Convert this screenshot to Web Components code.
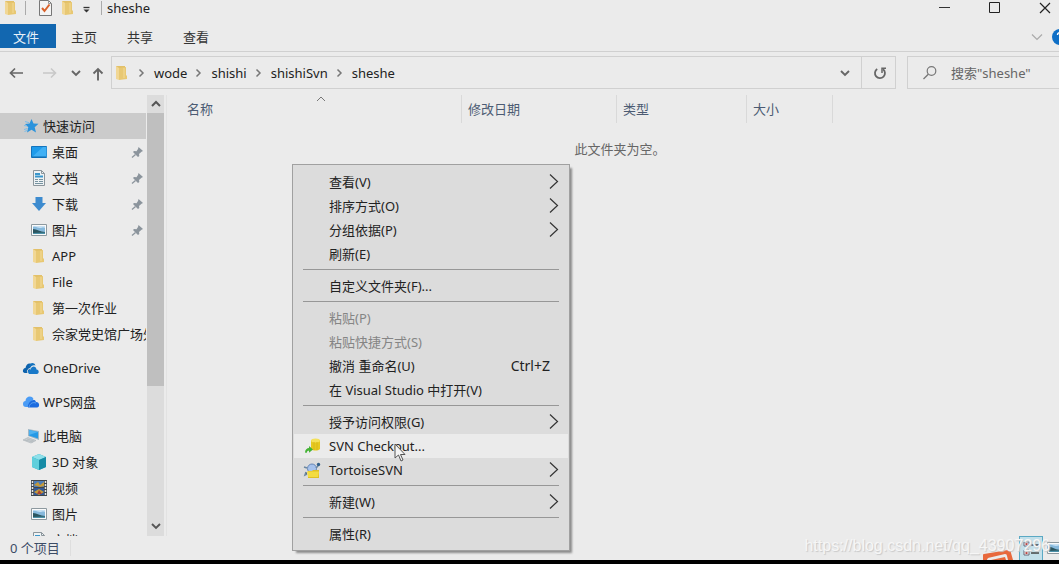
<!DOCTYPE html>
<html lang="zh-CN">
<head>
<meta charset="utf-8">
<title>sheshe</title>
<style>
html,body{margin:0;height:100%;overflow:hidden}
body{font:13px/16px "Noto Sans","Noto Sans CJK SC",sans-serif;color:#222;background:#000}
</style>
</head>
<body>
<explorer-window></explorer-window>
<script>
const define=(name,html,setup)=>customElements.define(name,class extends HTMLElement{
  connectedCallback(){
    if(this.shadowRoot)return;
    const t=document.createElement('template');
    t.innerHTML=typeof html==='function'?html(this):html;
    this.attachShadow({mode:'open'}).append(t.content.cloneNode(true));
    if(setup)setup(this);
  }
});

const ICONS={
  folder:'<path d="M2 1h9v13H2z" fill="#e2c069"/><path d="M2 1l3 2v12l-3-1z" fill="#f1d795"/><path d="M5 3l7-1v8l1 1v3l-8 1z" fill="#e8c873"/><path d="M10 3v10" stroke="#f2da98"/>',
  check:'<path d="M1.500 .5h9l3 3v12h-12z" fill="#f4f4f4" stroke="#777"/><path d="M10.500 .5v3h3" fill="none" stroke="#999"/><path d="M4 8l2.500 3 5-6.500" fill="none" stroke="#d9622b" stroke-width="2"/>',
  drop:'<path d="M4.500 7.500h6" stroke="#333" stroke-width="1.300"/><path d="M4.500 9.500h6l-3 3z" fill="#333"/>',
  min:'<path d="M2 7.500h11" stroke="#333"/>',
  max:'<path d="M2.500 2.500h10v10h-10z" fill="none" stroke="#222"/>',
  close:'<path d="M3 3l10 10M13 3L3 13" stroke="#222" stroke-width="1.200"/>',
  down:'<path d="M4 6l4 4 4-4" fill="none" stroke="currentColor" stroke-width="1.900"/>',
  thin:'<path d="M3 5.500l5 5 5-5" fill="none" stroke="currentColor" stroke-width="1.200"/>',
  up:'<path d="M4 11l4-4 4 4" fill="none" stroke="currentColor" stroke-width="2"/>',
  caret:'<path d="M4 10l4-4 4 4" fill="none" stroke="#777"/>',
  crumb:'<path d="M5.500 4.500l3.500 3.500-3.500 3.500" fill="none" stroke="#777" stroke-width="1.500"/>',
  sub:'<path d="M5 0.500l7.500 7L5 14.500" fill="none" stroke="#333" stroke-width="1.200"/>',
  back:'<path d="M15 8H2.500M7 3.500L2.500 8l4.500 4.500" fill="none" stroke="currentColor" stroke-width="1.700"/>',
  fwd:'<path d="M1 8h12.500M9 3.500L13.500 8l-4.500 4.500" fill="none" stroke="currentColor" stroke-width="1.600"/>',
  upa:'<path d="M8 15.500V4M3.500 8.500L8 4l4.500 4.500" fill="none" stroke="currentColor" stroke-width="1.900"/>',
  refresh:'<path d="M6.200 4A5 5 0 1 0 12 4.200" fill="none" stroke="#666" stroke-width="1.800"/><path d="M11 8V3.300h4" fill="none" stroke="#666" stroke-width="1.500"/>',
  search:'<circle cx="9.500" cy="6" r="4.300" fill="none" stroke="#777" stroke-width="1.200"/><path d="M6.300 9.300L1.500 14" stroke="#777" stroke-width="1.300"/>',
  help:'<circle cx="8" cy="8" r="8" fill="#0f6fc6"/><path d="M5.500 6a2.500 2.500 0 1 1 3.500 2.300l-1 1v1.200M8 12v1.300" fill="none" stroke="#fff" stroke-width="1.500"/>',
  star:'<path d="M8.500 1l2 4.500 5 .3-3.800 3.400 1.300 5.300-4.500-2.700L4 14.500l1.300-5.300L2 6l4.500-.5z" fill="#2b93dc"/><path d="M2 3.500l4 1.200M1 7.500l3 .5M1 11.500l3.500-1M1.500 13.500l2.500-1" stroke="#79bdec"/>',
  desktop:'<path d="M.5 2.500h15v11H.5z" fill="#1f9bea" stroke="#1474bd"/><path d="M1 13L12 3h3.500v10z" fill="#41b0f4"/><path d="M1 13h14" stroke="#0c69ad"/>',
  doc:'<path d="M2.500.5h8l3 3v12h-11z" fill="#eef2f4" stroke="#8b959b"/><path d="M10.500.5v3h3" fill="none" stroke="#8b959b"/><path d="M4 4h5M4 6.500h8" stroke="#3b97cc" stroke-width="1.800"/><path d="M4 9.500h3M4 11.500h3M4 13.500h8M8 9.500h4M8 11.500h4" stroke="#76929f"/>',
  dl:'<path d="M4.500 1h7v6H15l-7 8-7-8h3.500z" fill="#3d8bcf"/>',
  pic:'<path d="M.5 2.500h15v11H.5z" fill="#fafafa" stroke="#8d999f"/><path d="M2 4h12v8H2z" fill="#87b9dc"/><path d="M2 5c3-1 5 1 7 1s3-1 5 0v-2H2z" fill="#c7e1f3"/><path d="M2 7c4 0 7 3 12 3v2H2z" fill="#2b5660"/><path d="M2 11l12-.5V12H2z" fill="#4c91a8"/>',
  cloud:'<path d="M0 12c-.5-2 .7-4 2.500-4C3 4.500 6 2 9 4.500L5.500 13H1.500z" fill="#0d62ac"/><path d="M6 14c-2.200-2-.5-4.500 1.500-4.500C8.500 5.500 13 5.500 13.500 9.500c3 .3 2.800 4.300.5 4.500z" fill="#1979c8"/><path d="M5.200 13.500C3.500 11 4.800 8.800 7 8.600 8.300 5 12 4.500 13.500 7.500" fill="none" stroke="#ebebeb"/><path d="M6 6c1-3.500 5-4 6.500-.5-2.500-.7-4.500.3-5.500 2.500z" fill="#1572bd"/>',
  wps:'<path d="M0 10c0-2 1-3 2.500-3C2.500 2 9 1 10.500 5L6 13H3c-2 0-3-1-3-3z" fill="#4b9cf5"/><path d="M5 13.500C4 8 12 3 13 8c4 0 4 5.500 1 5.500z" fill="#1c6bdf"/><path d="M6 13c1-4 4-5 7-4" fill="none" stroke="#5da4f4"/>',
  pc:'<path d="M5 1l11 2v9L5 8z" fill="#9fb6c5"/><path d="M6 2l9 2v6.500L6 7.500z" fill="#2599e6"/><path d="M6 2l9 2-9 3z" fill="#4fb2f0"/><path d="M0 12l5-2.500 8 3L8 15z" fill="#cdd2d5" stroke="#a6aeb3" stroke-width=".6"/><path d="M2 12l8 2M4 11l7 2" stroke="#a6aeb3" stroke-width=".6"/>',
  cube:'<path d="M8 0l7 3v10l-7 3-7-3V3z" fill="#25a8bd"/><path d="M8 0l7 3-7 3-7-3z" fill="#8fe0ea"/><path d="M1 3l7 3v10l-7-3z" fill="#5fcfdc"/><path d="M8 6l7-3v10l-7 3z" fill="#168ba5"/>',
  video:'<path d="M0 0h16v16H0z" fill="#40464b"/><path d="M1.500 1v15M14.500 1v15" stroke="#e6e6e6" stroke-width="1.500" stroke-dasharray="2 1"/><path d="M3 1h10v6H3z" fill="#4e7db8"/><path d="M3 8h10v7H3z" fill="#345a98"/><path d="M3 5l4-3 2 3 4-3v4l-4 1zM3 12l5-3 5 3-5 3z" fill="#c59a3a"/><path d="M8 10l3 4H6z" fill="#a94435"/>',
  pin:'<path d="M9.500 3l4.500 4-1.500.7-2.500 2.300.3 2-1.300 1-5-5L5 7l2.500.3L9 5z" fill="#8b949c"/><path d="M6.500 10.500l-3.500 3" stroke="#8b949c" stroke-width="1.300"/>',
  checkout:'<path d="M7 2v9c2 2 7 2 9 0V2z" fill="#e7c91f"/><ellipse cx="11.500" cy="2.500" rx="4.500" ry="2" fill="#f4e15b"/><path d="M10 4v8M13 4v8" stroke="#d9b918"/><path d="M1 14.500c0-3 2-4.500 4-4.500V8l4 3.500-4 3.200v-2c-1.500 0-2 .5-2.500 2.300z" fill="#45b336"/>',
  tortoise:'<ellipse cx="8" cy="6.500" rx="4.500" ry="4.500" fill="#a6c2ec" stroke="#6686b5"/><path d="M0 5l3 1M2 10l-1 3 2-1M12 6l2-2" stroke="#6b87a0" stroke-width="1.500"/><circle cx="14.500" cy="2.500" r="1.700" fill="#315f89"/><path d="M4 9h4l1-1h6v8H4z" fill="#dfc024"/><path d="M3 9.500h12l-1 5.500H4z" fill="#f3dc40"/>',
  details:'<path d="M1 1h5v4H1zM1 9h5v5H1z" fill="#f8f8f8" stroke="#667"/><path d="M8 4h8M8 12h8" stroke="#444" stroke-width="1.500"/><path d="M2.500 2h2v2h-2zM2.500 11h2v2h-2z" fill="#b44"/>'
};
define('ui-icon',h=>`<style>:host{display:inline-block;flex:none;width:16px;height:16px}svg{display:block;width:100%;height:100%;overflow:visible}</style><svg viewBox="0 0 16 16" aria-hidden="true">${ICONS[h.getAttribute('name')]||''}</svg>`);

define('title-bar',`<style>
:host{display:flex;height:24px;align-items:flex-start}
.row{display:flex;align-items:center;height:16px;flex:1}
i{width:1px;height:14px;background:#aaa}
button{all:unset;width:50px;height:16px;display:grid;place-items:center}
.tool{width:16px}
.app{margin:0 6px 0 3px}.rev{margin:0 6px 0 12px}.more{margin:0 6px 0 3px}
h1{font:inherit;margin:0 0 0 5px;flex:1}
.caps{display:flex;margin-right:-11px}
</style><div class="row"><ui-icon class="app" name="folder"></ui-icon><i></i>
<button class="tool rev" aria-label="属性栏"><ui-icon name="check"></ui-icon></button><button class="tool" aria-label="文件夹"><ui-icon name="folder"></ui-icon></button><button class="tool more" aria-label="自定义"><ui-icon name="drop"></ui-icon></button><i></i>
<h1><slot></slot></h1></div>
<div class="caps"><button aria-label="最小化"><ui-icon name="min"></ui-icon></button><button aria-label="最大化"><ui-icon name="max"></ui-icon></button><button aria-label="关闭"><ui-icon name="close"></ui-icon></button></div>`);

define('ribbon-tabs',`<style>
:host{display:flex;height:27px;border-bottom:1px solid #d0d0d0;overflow:hidden}
button{all:unset;width:56px;height:24px;padding-top:2px;box-sizing:border-box;line-height:22px;text-align:center;color:#333}
.file{background:#1267b0;color:#e8f1f8;padding-right:4px}
.end{margin-left:auto;display:flex;align-items:center;height:26px;gap:7px;margin-right:-9px;color:#aaa}
</style><button class="file">文件</button><button>主页</button><button>共享</button><button>查看</button>
<div class="end"><ui-icon name="thin"></ui-icon><ui-icon name="help"></ui-icon></div>`);

define('address-bar',`<style>
:host{display:flex;height:33px;padding:4px 0 6px;align-items:stretch;overflow:hidden}
button{all:unset;display:grid;place-items:center}
.nav{display:flex;width:111px;color:#666;box-sizing:border-box;padding-left:8px;align-items:center}
.nav .off{color:#c8c8c8;margin-left:18px}.nav .h{margin-left:10px}.nav .u{margin-left:6px}
.box{flex:1;display:flex;align-items:center;border:1px solid #d0d0d0;box-sizing:border-box;padding-left:2px}
ol{list-style:none;margin:0;padding:0;display:flex;flex:1}
li{display:flex;align-items:center}li ui-icon{margin:0 4px}
a{color:#222;text-decoration:none}
.dd{width:32px;height:31px;color:#666}.re{width:34px;height:31px;border-left:1px solid #d0d0d0;box-sizing:border-box}
label{display:flex;align-items:center;width:152px;margin-left:11px;border:1px solid #d0d0d0;border-right:0;box-sizing:border-box;padding-left:14px;gap:13px}
input{all:unset;width:100px;min-width:0;color:#666}input::placeholder{color:#666;opacity:1}
</style><div class="nav"><button aria-label="返回"><ui-icon name="back"></ui-icon></button><button class="off" aria-label="前进"><ui-icon name="fwd"></ui-icon></button><button class="h" aria-label="最近"><ui-icon name="down"></ui-icon></button><button class="u" aria-label="向上"><ui-icon name="upa"></ui-icon></button></div>
<div class="box"><ui-icon name="folder"></ui-icon><ol></ol><button class="dd" aria-label="历史"><ui-icon name="down"></ui-icon></button><button class="re" aria-label="刷新"><ui-icon name="refresh"></ui-icon></button></div>
<label><ui-icon name="search"></ui-icon><input type="text" aria-label="搜索" placeholder='搜索"sheshe"'></label>`,h=>{
  h.shadowRoot.querySelector('ol').innerHTML=h.getAttribute('path').split('/').map(p=>`<li><ui-icon name="crumb"></ui-icon><a href="#">${p}</a></li>`).join('');
});

define('nav-item',h=>`<style>
:host{display:block;height:26px}
:host([group]){margin-top:8px}
:host([current]){background:#cbcbcb}
a{display:flex;align-items:center;height:26px;padding:0 1px 0 31px;gap:5px;color:#222;text-decoration:none;white-space:nowrap}
:host([root]) a{padding-left:23px;gap:4px}
span{flex:1}
</style><a href="#"><ui-icon name="${h.getAttribute('icon')}"></ui-icon><span><slot></slot></span>${h.hasAttribute('pinned')?'<ui-icon name="pin"></ui-icon>':''}</a>`);

define('nav-pane',`<style>
:host{display:flex;width:166px;border-right:1px solid #e2e2e2;overflow:hidden;flex:none}
nav{flex:1;min-width:0;overflow:hidden;padding-top:18px;margin-right:1px}
.bar{width:17px;background:#dcdcdc;display:grid;grid-template-rows:18px 273px 1fr 18px;margin-right:2px;color:#555;justify-items:center}
.bar b{background:#bfbfbf;width:17px}
.bar ui-icon:last-child{grid-row:4}
</style><nav aria-label="导航"><slot></slot></nav><div class="bar"><ui-icon name="up"></ui-icon><b></b><ui-icon name="down"></ui-icon></div>`);

define('file-list',`<style>
:host{display:block;flex:1;min-width:0;padding-left:14px}
.cols{position:relative}
table{border-collapse:separate;border-spacing:0;table-layout:fixed;width:652px}
th{font-weight:400;text-align:left;color:#4c5b73;height:28px;padding:0 6px;border-right:1px solid #d9d9d9;box-sizing:border-box}
th:nth-child(1){width:281px}th:nth-child(2){width:155px}th:nth-child(3){width:130px}th:nth-child(4){width:86px}
.cols ui-icon{position:absolute;left:132px;top:-4px}
p{margin:18px 0 0;text-align:center;color:#666}
</style><div class="cols"><table><thead><tr><th>名称</th><th>修改日期</th><th>类型</th><th>大小</th></tr></thead></table><ui-icon name="caret"></ui-icon></div><p>此文件夹为空。</p>`);

define('status-bar',`<style>
:host{display:flex;height:24px;align-items:center;padding-left:10px;color:#3c4c66;overflow:hidden}
span{padding-right:10px;border-right:1px solid #dedede}
.logo{margin-left:auto;width:32px;height:10px;align-self:flex-end;margin-right:4px}
button{all:unset;display:grid;place-items:center;width:24px;height:24px;box-sizing:border-box}
.on{background:#c3e0ea;border:1px solid #5ba9c4;border-bottom:0}
.pv{margin-right:-8px}
</style><span>0 个项目</span>
<svg class="logo" viewBox="0 0 32 10" aria-hidden="true"><path d="M0 10L-1 7q-1-2 2-3L25 0q3 0 3 3l2 7z" fill="#e8683c"/><path d="M4 10q0-2 3-2.500L22 4q2 0 2 2l1 4z" fill="#ebebeb"/><path d="M8 10l14-3 1 3z" fill="#e8683c"/></svg>
<button class="on" aria-label="详细信息"><ui-icon name="details"></ui-icon></button><button class="pv" aria-label="大图标"><ui-icon name="pic"></ui-icon></button>`);

define('menu-item',h=>`<style>
:host{display:block}
button{all:unset;display:flex;align-items:center;box-sizing:border-box;width:100%;height:24px;padding:0 7px 0 10px;color:#222;white-space:nowrap}
:host([disabled]) button{color:#858585}
:host([active]) button{background:#ebebeb}
.ic{width:25px;height:16px}
.t{flex:1}kbd{font:inherit;font-size:14px;margin-right:11px}
</style><button role="menuitem"${h.hasAttribute('disabled')?' disabled':''}><span class="ic">${h.hasAttribute('icon')?`<ui-icon name="${h.getAttribute('icon')}"></ui-icon>`:''}</span><span class="t"><slot></slot></span>${h.hasAttribute('key')?`<kbd>${h.getAttribute('key')}</kbd>`:''}${h.hasAttribute('sub')?'<ui-icon name="sub"></ui-icon>':''}</button>`);

define('context-menu',`<style>
:host{display:block;box-sizing:border-box;width:278px;padding:5px 1px 4px;background:#dcdcdc;border:1px solid #a0a0a0;box-shadow:3px 3px 2px -1px #8c8c8c}
::slotted(hr){border:0;height:1px;background:#979797;margin:3px 9px 4px}
</style><div role="menu"><slot></slot></div>`);

define('explorer-window',`<style>
:host{display:flex;flex-direction:column;box-sizing:border-box;height:100vh;border-bottom:4px solid #000;background:#ebebeb;position:relative;overflow:hidden}
main{display:flex;flex:1;min-height:0}
context-menu{position:absolute;left:292px;top:164px}
.cursor{position:absolute;left:394px;top:443px;width:12px;height:19px}
.mark{position:absolute;right:9px;bottom:4px;font:16px/20px "Liberation Sans",sans-serif;color:#f6f6f6;text-shadow:1px 1px 1px #c8c8c8}
</style>
<title-bar>sheshe</title-bar><ribbon-tabs></ribbon-tabs><address-bar path="wode/shishi/shishiSvn/sheshe"></address-bar>
<main><nav-pane>
<nav-item root current icon="star">快速访问</nav-item>
<nav-item pinned icon="desktop">桌面</nav-item><nav-item pinned icon="doc">文档</nav-item><nav-item pinned icon="dl">下载</nav-item><nav-item pinned icon="pic">图片</nav-item>
<nav-item icon="folder">APP</nav-item><nav-item icon="folder">File</nav-item><nav-item icon="folder">第一次作业</nav-item><nav-item icon="folder">佘家党史馆广场外</nav-item>
<nav-item root group icon="cloud">OneDrive</nav-item><nav-item root group icon="wps">WPS网盘</nav-item><nav-item root group icon="pc">此电脑</nav-item>
<nav-item icon="cube">3D 对象</nav-item><nav-item icon="video">视频</nav-item><nav-item icon="pic">图片</nav-item><nav-item icon="doc">文档</nav-item>
</nav-pane><file-list></file-list></main>
<status-bar></status-bar>
<context-menu>
<menu-item sub>查看(V)</menu-item><menu-item sub>排序方式(O)</menu-item><menu-item sub>分组依据(P)</menu-item><menu-item>刷新(E)</menu-item><hr>
<menu-item>自定义文件夹(F)...</menu-item><hr>
<menu-item disabled>粘贴(P)</menu-item><menu-item disabled>粘贴快捷方式(S)</menu-item><menu-item key="Ctrl+Z">撤消 重命名(U)</menu-item><menu-item>在 Visual Studio 中打开(V)</menu-item><hr>
<menu-item sub>授予访问权限(G)</menu-item><menu-item active icon="checkout">SVN Checkout...</menu-item><menu-item sub icon="tortoise">TortoiseSVN</menu-item><hr>
<menu-item sub>新建(W)</menu-item><hr><menu-item>属性(R)</menu-item>
</context-menu>
<svg class="cursor" viewBox="0 0 12 19" aria-hidden="true"><path d="M1 1v14l3.500-3 2.500 6 2-1-2.500-5.500H11z" fill="#f4f4f4" stroke="#555"/></svg>
<div class="mark">https://blog.csdn.net/qq_43907296</div>`);
</script>
</body>
</html>
